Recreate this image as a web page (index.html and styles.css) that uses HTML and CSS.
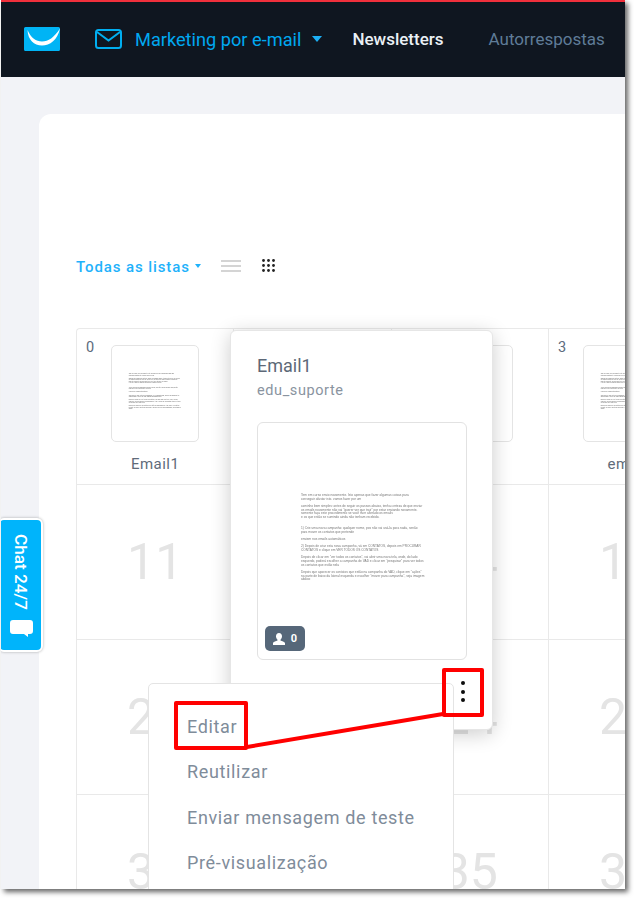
FILE: index.html
```html
<!DOCTYPE html>
<html lang="pt">
<head>
<meta charset="utf-8">
<title>Newsletters</title>
<link rel="stylesheet" href="styles.css">
</head>
<body>
<div class="frame">
  <header class="topbar">
    <svg class="logo" viewBox="0 0 36 24" aria-hidden="true"><path d="M1.5 0H34.500A1.500 1.500 0 0 1 36 1.500V22.500A1.500 1.500 0 0 1 34.500 24H1.500A1.500 1.500 0 0 1 0 22.500V1.500A1.500 1.500 0 0 1 1.500 0Z" fill="#00b4f5"/><path d="M3.500 3C7 11 12 14.500 18 14.500C24.500 14.500 30 10.500 36 1.500C33.500 13 26 18.500 18 18.500C10 18.500 4 13 3.500 3Z" fill="#fff"/></svg>
    <svg class="mail" viewBox="0 0 27 20" aria-hidden="true"><rect x="1" y="1" width="25" height="18" rx="2.500" fill="none" stroke="#00aef0" stroke-width="2"/><path d="M2 3L13.500 11.500L25 3" fill="none" stroke="#00aef0" stroke-width="2"/></svg>
    <span class="nav-active">Marketing por e-mail</span>
    <span class="nav-caret"></span>
    <span class="nav-white">Newsletters</span>
    <span class="nav-dim">Autorrespostas</span>
  </header>

  <main class="main">
    <section class="card">
      <div class="toolbar">
        <span class="lists">Todas as listas</span>
        <span class="lists-caret"></span>
        <span class="burger"><i></i><i></i><i></i></span>
        <svg class="dots-grid" viewBox="0 0 13 13" aria-hidden="true"><g fill="#222"><circle cx="1.500" cy="1.500" r="1.400"/><circle cx="6.500" cy="1.500" r="1.400"/><circle cx="11.500" cy="1.500" r="1.400"/><circle cx="1.500" cy="6.500" r="1.400"/><circle cx="6.500" cy="6.500" r="1.400"/><circle cx="11.500" cy="6.500" r="1.400"/><circle cx="1.500" cy="11.500" r="1.400"/><circle cx="6.500" cy="11.500" r="1.400"/><circle cx="11.500" cy="11.500" r="1.400"/></g></svg>
      </div>

      <div class="grid">
        <div class="cell">
          <span class="count">0</span>
          <div class="thumb"><div class="doc doc-small">
            <p>Tem em curso envio novamente. Isto apenas que fazer algumas coisas para<br>conseguir afastar isto. vamos fazer por um</p>
            <p>caminho bem simples: antes de seguir os passos abaixo, tenha certeza de que enviar<br>os emails novamente não vai "querer ver que trair" por estar enviando novamente.<br>somente faça este procedimento se você tiver alterado os emails<br>e os que estão se sumindo ainda não tenham recebido.</p>
            <p class="gap">1) Crie uma nova campanha: qualquer nome, pos não vai usá-la para nada, senão<br>para mover os contatos que pretende</p>
            <p>enviem nos emails automáticos</p>
            <p>2) Depois de criar esta nova campanha, vá em CONTATOS, depois em PROCURAR<br>CONTATOS e clique em VER TODOS OS CONTATOS</p>
            <p>Depois de clicar em "ver todos os contatos", vai abrir uma nova tela, onde, do lado<br>esquerdo, poderá escolher a campanha de VAD e clicar em "pesquisar" para ver todos<br>os contatos que estão nela</p>
            <p>Depois que aparecer os contatos que estão na campanha do VAD, clique em "ações"<br>na parte de baixo da lateral esquerda e escolher "mover para campanha", seja imagem<br>abaixo</p>
          </div></div>
          <span class="name">Email1</span>
        </div>
        <div class="cell"></div>
        <div class="cell">
          <div class="thumb"></div>
        </div>
        <div class="cell">
          <span class="count">3</span>
          <div class="thumb"><div class="doc doc-small">
            <p>Tem em curso envio novamente. Isto apenas que fazer algumas coisas para<br>conseguir afastar isto. vamos fazer por um</p>
            <p>caminho bem simples: antes de seguir os passos abaixo, tenha certeza de que enviar<br>os emails novamente não vai "querer ver que trair" por estar enviando novamente.<br>somente faça este procedimento se você tiver alterado os emails<br>e os que estão se sumindo ainda não tenham recebido.</p>
            <p class="gap">1) Crie uma nova campanha: qualquer nome, pos não vai usá-la para nada, senão<br>para mover os contatos que pretende</p>
            <p>enviem nos emails automáticos</p>
            <p>2) Depois de criar esta nova campanha, vá em CONTATOS, depois em PROCURAR<br>CONTATOS e clique em VER TODOS OS CONTATOS</p>
            <p>Depois de clicar em "ver todos os contatos", vai abrir uma nova tela, onde, do lado<br>esquerdo, poderá escolher a campanha de VAD e clicar em "pesquisar" para ver todos<br>os contatos que estão nela</p>
            <p>Depois que aparecer os contatos que estão na campanha do VAD, clique em "ações"<br>na parte de baixo da lateral esquerda e escolher "mover para campanha", seja imagem<br>abaixo</p>
          </div></div>
          <span class="name">email</span>
        </div>

        <div class="cell big">11</div><div class="cell big"></div><div class="cell big">14</div><div class="cell big">15</div>
        <div class="cell big">22</div><div class="cell big"></div><div class="cell big">24</div><div class="cell big">25</div>
        <div class="cell big">33</div><div class="cell big"></div><div class="cell big">35</div><div class="cell big">36</div>
      </div>
    </section>
  </main>

  <aside class="chat">
    <span class="chat-text">Chat 24/7</span>
    <svg class="chat-bubble" viewBox="0 0 23 17" aria-hidden="true"><path d="M3 0H20A3 3 0 0 1 23 3V11A3 3 0 0 1 20 14H18L18 17L14 14H3A3 3 0 0 1 0 11V3A3 3 0 0 1 3 0Z" fill="#fff"/></svg>
  </aside>

  <article class="popup">
    <h2 class="popup-title">Email1</h2>
    <div class="popup-sub">edu_suporte</div>
    <div class="popup-thumb">
      <div class="doc doc-large">
        <p>Tem em curso envio novamente. Isto apenas que fazer algumas coisas para<br>conseguir afastar isto. vamos fazer por um</p>
        <p>caminho bem simples: antes de seguir os passos abaixo, tenha certeza de que enviar<br>os emails novamente não vai "querer ver que trair" por estar enviando novamente.<br>somente faça este procedimento se você tiver alterado os emails<br>e os que estão se sumindo ainda não tenham recebido.</p>
        <p class="gap">1) Crie uma nova campanha: qualquer nome, pos não vai usá-la para nada, senão<br>para mover os contatos que pretende</p>
        <p>enviem nos emails automáticos</p>
        <p>2) Depois de criar esta nova campanha, vá em CONTATOS, depois em PROCURAR<br>CONTATOS e clique em VER TODOS OS CONTATOS</p>
        <p>Depois de clicar em "ver todos os contatos", vai abrir uma nova tela, onde, do lado<br>esquerdo, poderá escolher a campanha de VAD e clicar em "pesquisar" para ver todos<br>os contatos que estão nela</p>
        <p>Depois que aparecer os contatos que estão na campanha do VAD, clique em "ações"<br>na parte de baixo da lateral esquerda e escolher "mover para campanha", seja imagem<br>abaixo</p>
      </div>
      <span class="badge">
        <svg class="badge-icon" viewBox="0 0 12 12" aria-hidden="true"><path d="M6 0C7.900 0 9 1.400 9 3.300C9 4.800 8.300 6 7.500 6.700V7.600C8.700 8.300 12 8.900 12 10.300V12H0V10.300C0 8.900 3.300 8.300 4.500 7.600V6.700C3.700 6 3 4.800 3 3.300C3 1.400 4.100 0 6 0Z" fill="#fff"/></svg>
        <span>0</span>
      </span>
    </div>
    <div class="kebab"><i></i><i></i><i></i></div>
  </article>

  <nav class="menu">
    <a class="menu-item">Editar</a>
    <a class="menu-item">Reutilizar</a>
    <a class="menu-item">Enviar mensagem de teste</a>
    <a class="menu-item">Pré-visualização</a>
  </nav>

  <svg class="annot" viewBox="0 0 625 889" aria-hidden="true">
    <g fill="none" stroke="#f00" stroke-width="4" stroke-linejoin="round">
      <rect x="175" y="703" width="70" height="45"/>
      <rect x="443" y="670" width="38" height="45"/>
      <path d="M246 747L442 714"/>
    </g>
  </svg>
</div>
</body>
</html>
```

FILE: styles.css
```css
* { box-sizing: border-box; }
html, body { margin: 0; padding: 0; background: #fff; }
body { font-family: Roboto, "Liberation Sans", sans-serif; width: 634px; height: 898px; overflow: hidden; }

.frame {
  position: relative;
  width: 624px;
  height: 889px;
  margin-left: 1px;
  overflow: hidden;
  background: #f2f3f7;
  box-shadow: 3px 3px 5px #666;
}

.topbar {
  height: 77px;
  background: #0f1620;
  border-top: 2px solid #f0303c;
  display: flex;
  align-items: center;
  padding-left: 23px;
  white-space: nowrap;
  font-size: 18px;
}
.logo { width: 36px; height: 24px; margin-top: -2px; flex: none; }
.mail { width: 27px; height: 20px; margin-left: 35px; margin-top: -1px; flex: none; }
.nav-active { color: #00a8f0; margin-left: 13px; font-size: 18.200px; margin-top: -1px; }
.nav-caret {
  width: 0; height: 0; margin-left: 11px; margin-top: -1px;
  border-left: 5.500px solid transparent; border-right: 5.500px solid transparent; border-top: 6px solid #1cb0f5;
}
.nav-white { color: #eaf0f5; font-weight: 500; font-size: 17px; margin-left: 30px; margin-top: -2px; }
.nav-dim { color: #5f7c98; font-size: 17px; margin-left: 45px; margin-top: -2px; }

.main { padding: 37px 0 0 38px; }
.card {
  background: #fff;
  border-radius: 12px 0 0 0;
  width: 640px;
  height: 780px;
  padding: 140px 0 0 37px;
}
.toolbar { height: 24px; display: flex; align-items: center; }
.lists { color: #1fb2fb; font-size: 15px; font-weight: 500; letter-spacing: .9px; margin-top: 2px; }
.lists-caret {
  width: 0; height: 0; margin-left: 5px;
  border-left: 3.500px solid transparent; border-right: 3.500px solid transparent; border-top: 4px solid #1fb2fb;
}
.burger { display: flex; flex-direction: column; gap: 2.500px; width: 20px; margin-left: 20px; }
.burger i { display: block; height: 2.500px; background: #d4d4d4; }
.dots-grid { width: 13px; height: 13px; margin-left: 21px; margin-top: -1px; }

.grid {
  margin-top: 50px;
  width: 630px;
  display: grid;
  grid-template-columns: repeat(4, 157.330px);
  grid-template-rows: 156px 155px 155px 155px;
  border-top: 1px solid #e9e9e9;
  border-left: 1px solid #e9e9e9;
  border-radius: 4px 0 0 0;
}
.cell {
  position: relative;
  border-right: 1px solid #e9e9e9;
  border-bottom: 1px solid #e9e9e9;
  display: flex;
  flex-direction: column;
  align-items: center;
  padding-top: 16px;
}
.count { position: absolute; left: 9px; top: 10px; font-size: 14.500px; color: #5c6b7d; }
.thumb {
  width: 88px;
  height: 97px;
  margin-left: -1px;
  border: 1px solid #e4e4e4;
  border-radius: 5px;
  background: #fff;
  overflow: hidden;
  flex: none;
}
.name { margin-top: 13px; font-size: 15px; letter-spacing: .5px; color: #5f6b7a; line-height: 18px; }

.doc { font-family: "Liberation Sans", Arial, sans-serif; white-space: nowrap; }
.doc p { margin: 0; }
.doc-small {
  margin: 27px 0 0 17px;
  font-size: 1.350px;
  line-height: 1.550px;
  color: #555;
  filter: blur(.15px);
}
.doc-small p { margin-bottom: 1.530px; }
.doc-small .gap { margin-top: 3.070px; }
.doc-large {
  margin: 71px 0 0 43px;
  font-size: 3.200px;
  line-height: 3.670px;
  color: #777;
  filter: blur(.35px);
}
.doc-large p { margin-bottom: 3.650px; }
.doc-large .gap { margin-top: 7.300px; }

.big {
  justify-content: center;
  padding-top: 0;
  font-size: 50px;
  color: #e4e4e4;
  line-height: 1;
}

.chat {
  position: absolute;
  left: -3px;
  top: 518px;
  width: 45px;
  height: 134px;
  background: #00b4fb;
  border: 2px solid #fff;
  border-radius: 6px;
  box-shadow: 0 0 3px rgba(0,0,0,.3);
  display: flex;
  flex-direction: column;
  align-items: center;
  padding: 14px 0 0 1px;
}
.chat-text {
  writing-mode: vertical-rl;
  color: #fff;
  font-size: 17.200px;
  font-weight: 500;
  line-height: 20px;
  white-space: nowrap;
}
.chat-bubble { width: 23px; height: 17px; margin-top: 10px; flex: none; }

.popup {
  position: absolute;
  left: 229px;
  top: 330px;
  width: 263px;
  height: 400px;
  background: #fff;
  border: 1px solid #e6e6e6;
  border-radius: 6px;
  box-shadow: 0 4px 20px rgba(0,0,0,.2);
  padding: 24px 0 0 26px;
}
.popup-title { margin: 0; font-size: 18px; font-weight: 400; color: #5d6877; line-height: 22px; }
.popup-sub { margin-top: 5px; font-size: 14.500px; letter-spacing: .6px; color: #8a949f; line-height: 18px; }
.popup-thumb {
  position: relative;
  margin-top: 22px;
  width: 210px;
  height: 238px;
  border: 1px solid #e2e2e2;
  border-radius: 6px;
  overflow: hidden;
}
.badge {
  position: absolute;
  left: 7px;
  bottom: 8px;
  width: 40px;
  height: 25px;
  background: #566779;
  border-radius: 5px;
  color: #fff;
  font-size: 11px;
  font-weight: 700;
  display: flex;
  align-items: center;
  justify-content: center;
  gap: 6px;
}
.badge-icon { width: 12px; height: 12px; }
.kebab {
  position: absolute;
  right: 27px;
  bottom: 27px;
  display: flex;
  flex-direction: column;
  gap: 4.500px;
}
.kebab i { display: block; width: 4px; height: 4px; border-radius: 50%; background: #0c0c0c; }

.menu {
  position: absolute;
  left: 147px;
  top: 683px;
  width: 306px;
  height: 230px;
  background: #fff;
  border: 1px solid #e4e4e4;
  border-radius: 5px;
  padding-top: 20px;
  display: flex;
  flex-direction: column;
}
.menu-item {
  height: 45.300px;
  line-height: 45.300px;
  padding-left: 38px;
  font-size: 18px;
  letter-spacing: .65px;
  color: #7f8c9a;
  white-space: nowrap;
}

.annot { position: absolute; left: 0; top: 0; width: 625px; height: 889px; pointer-events: none; }
```
